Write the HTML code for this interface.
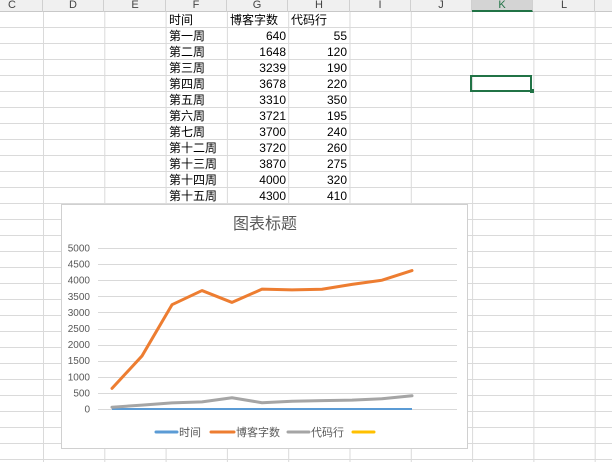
<!DOCTYPE html><html><head><meta charset="utf-8"><style>
body{margin:0;width:612px;height:462px;overflow:hidden;background:#fff;font-family:"Liberation Sans","Noto Sans CJK SC",sans-serif;position:relative}
.hdr{position:absolute;left:0;top:0;width:612px;height:12px;background:#f0f0f0;border-bottom:1px solid #c8c8c8;box-sizing:border-box}
.h{position:absolute;top:0;height:12px;font-size:11px;line-height:11px;color:#444;text-align:center;width:61px;border-right:1px solid #d0d0d0;box-sizing:border-box}
.grid{position:absolute;left:0;top:12px;width:612px;height:450px;
background-image:linear-gradient(#dadada 1px,transparent 1px),linear-gradient(90deg,#dadada 1px,transparent 1px);
background-size:100% 16px,61.3px 100%;background-position:0 15px,-18.3px 0}
.c{position:absolute;font-size:12px;line-height:16px;height:16px;color:#000}
.r{text-align:right}
</style></head><body>
<div class="grid"></div>
<div class="hdr"></div>
<div class="h" style="left:-18px">C</div>
<div class="h" style="left:43px">D</div>
<div class="h" style="left:105px">E</div>
<div class="h" style="left:166px">F</div>
<div class="h" style="left:227px">G</div>
<div class="h" style="left:289px">H</div>
<div class="h" style="left:350px">I</div>
<div class="h" style="left:411px">J</div>
<div class="h" style="left:472px;background:#d4d4d4;border-bottom:2px solid #217346;color:#217346">K</div>
<div class="h" style="left:534px">L</div>
<div style="position:absolute;left:470px;top:75px;width:62px;height:17px;border:2px solid #217346;box-sizing:border-box"></div>
<div style="position:absolute;left:530px;top:89px;width:4px;height:4px;background:#217346"></div>
<div id="cells"></div>
<script>
var d=[["时间","博客字数","代码行"],["第一周",640,55],["第二周",1648,120],["第三周",3239,190],["第四周",3678,220],["第五周",3310,350],["第六周",3721,195],["第七周",3700,240],["第十二周",3720,260],["第十三周",3870,275],["第十四周",4000,320],["第十五周",4300,410]];
var h="";d.forEach(function(r,i){var y=12+16*i;
h+='<div class="c" style="left:169px;top:'+y+'px">'+r[0]+'</div>';
if(i==0){h+='<div class="c" style="left:230px;top:'+y+'px">'+r[1]+'</div><div class="c" style="left:291px;top:'+y+'px">'+r[2]+'</div>';}
else{h+='<div class="c r" style="left:227px;width:59px;top:'+y+'px">'+r[1]+'</div><div class="c r" style="left:289px;width:58px;top:'+y+'px">'+r[2]+'</div>';}});
document.getElementById("cells").innerHTML=h;
</script>
<svg style="position:absolute;left:0;top:0" width="612" height="462">
<rect x="61.5" y="204.5" width="406" height="244" fill="#fff" stroke="#d0d0d0"/>
<text x="265" y="229" font-size="16" fill="#595959" text-anchor="middle" font-family="Liberation Sans,Noto Sans CJK SC,sans-serif">图表标题</text>
<g stroke="#d9d9d9" stroke-width="1" id="gl"></g>
<g font-size="10" fill="#595959" text-anchor="end" font-family="Liberation Sans,sans-serif" id="yl"></g>
<polyline id="p0" fill="none" stroke="#5b9bd5" stroke-width="2"/>
<polyline id="p1" fill="none" stroke="#ed7d31" stroke-width="3" stroke-linejoin="round" stroke-linecap="round"/>
<polyline id="p2" fill="none" stroke="#a5a5a5" stroke-width="3" stroke-linejoin="round" stroke-linecap="round"/>
<g stroke-width="3" stroke-linecap="round">
<line x1="156" y1="432" x2="177" y2="432" stroke="#5b9bd5"/>
<line x1="211" y1="432" x2="234" y2="432" stroke="#ed7d31"/>
<line x1="288" y1="432" x2="309" y2="432" stroke="#a5a5a5"/>
<line x1="353" y1="432" x2="374" y2="432" stroke="#ffc000"/>
</g>
<g font-size="11" fill="#595959" font-family="Liberation Sans,Noto Sans CJK SC,sans-serif">
<text x="179" y="436">时间</text><text x="236" y="436">博客字数</text><text x="311" y="436">代码行</text>
</g>
</svg>
<script>
var gl="",yl="";for(var k=0;k<=10;k++){var y=409-16.1*k;gl+='<line x1="98" x2="457" y1="'+(Math.round(y)+.5)+'" y2="'+(Math.round(y)+.5)+'"/>';yl+='<text x="90" y="'+(y+3.5)+'">'+(k*500)+'</text>';}
document.getElementById("gl").innerHTML=gl;document.getElementById("yl").innerHTML=yl;
var p1="",p2="",p0="";d.slice(1).forEach(function(r,i){var x=112+30*i;p1+=x+","+(409-r[1]*0.0322)+" ";p2+=x+","+(409-r[2]*0.0322)+" ";p0+=x+",409 ";});
document.getElementById("p1").setAttribute("points",p1);document.getElementById("p2").setAttribute("points",p2);document.getElementById("p0").setAttribute("points",p0);
</script>
</body></html>
